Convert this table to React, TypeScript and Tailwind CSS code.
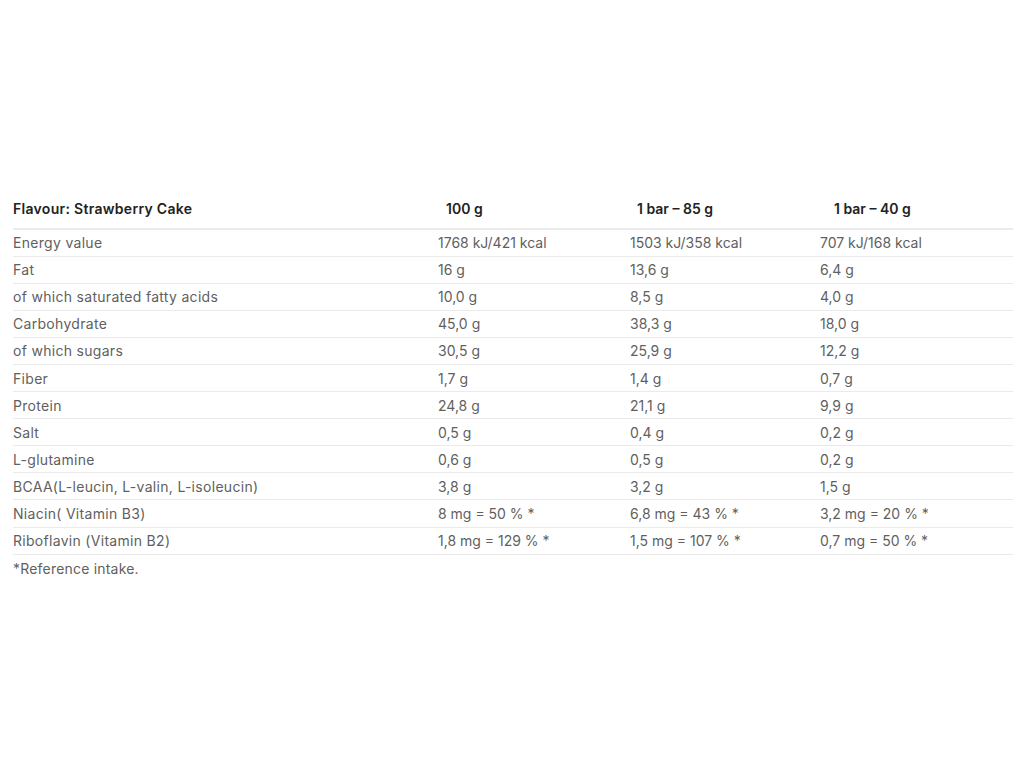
const ROWS: [string, string, string, string][] = [
  ['Energy value', '1768 kJ/421 kcal', '1503 kJ/358 kcal', '707 kJ/168 kcal'],
  ['Fat', '16 g', '13,6 g', '6,4 g'],
  ['of which saturated fatty acids', '10,0 g', '8,5 g', '4,0 g'],
  ['Carbohydrate', '45,0 g', '38,3 g', '18,0 g'],
  ['of which sugars', '30,5 g', '25,9 g', '12,2 g'],
  ['Fiber', '1,7 g', '1,4 g', '0,7 g'],
  ['Protein', '24,8 g', '21,1 g', '9,9 g'],
  ['Salt', '0,5 g', '0,4 g', '0,2 g'],
  ['L-glutamine', '0,6 g', '0,5 g', '0,2 g'],
  ['BCAA(L-leucin, L-valin, L-isoleucin)', '3,8 g', '3,2 g', '1,5 g'],
  ['Niacin( Vitamin B3)', '8 mg = 50 % *', '6,8 mg = 43 % *', '3,2 mg = 20 % *'],
  ['Riboflavin (Vitamin B2)', '1,8 mg = 129 % *', '1,5 mg = 107 % *', '0,7 mg = 50 % *'],
]

export default function App() {
  return (
    <div className="min-h-[768px] w-[1024px] bg-white pl-[13px] pr-[11px] pt-[189px] font-['Inter',sans-serif] text-[14px] text-[#5f5f5f]">
      <table className="w-full border-collapse">
        <colgroup>
          <col className="w-[425px]" />
          <col className="w-[192px]" />
          <col className="w-[190px]" />
          <col />
        </colgroup>
        <thead>
          <tr className="h-[40px] border-b-2 border-[#ebebeb] text-left text-[#222]">
            <th className="p-0 font-semibold tracking-[0.3px]">Flavour: Strawberry Cake</th>
            <th className="p-0 pl-[8px] font-semibold">100 g</th>
            <th className="p-0 pl-[7px] font-semibold">1 bar – 85 g</th>
            <th className="p-0 pl-[14px] font-semibold">1 bar – 40 g</th>
          </tr>
        </thead>
        <tbody>
          {ROWS.map((r) => (
            <tr key={r[0]} className="h-[27.1px] border-b border-[#ebebeb]">
              <td className="p-0 tracking-[0.3px]">{r[0]}</td>
              <td className="p-0">{r[1]}</td>
              <td className="p-0">{r[2]}</td>
              <td className="p-0">{r[3]}</td>
            </tr>
          ))}
        </tbody>
      </table>
      <p className="flex h-[27px] items-center tracking-[0.2px]">*Reference intake.</p>
    </div>
  )
}
